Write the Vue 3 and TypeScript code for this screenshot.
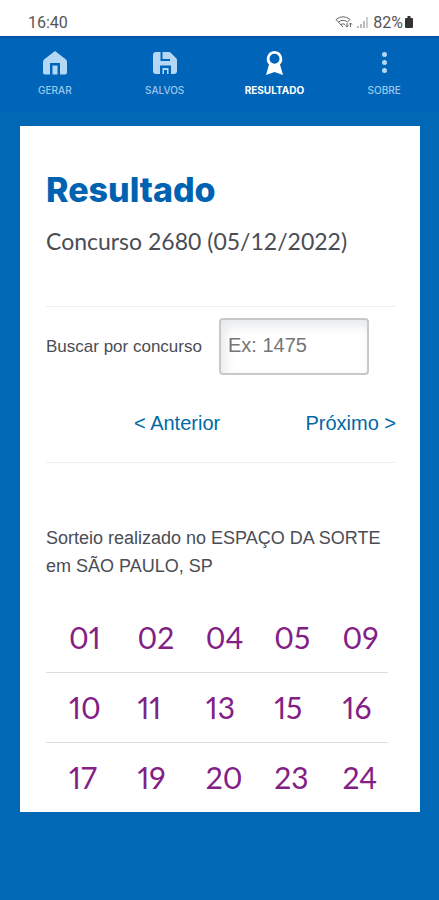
<script setup lang="ts">
import { ref } from 'vue'

type TabId = 'gerar' | 'salvos' | 'resultado' | 'sobre'

const tabs: { id: TabId; label: string }[] = [
  { id: 'gerar', label: 'GERAR' },
  { id: 'salvos', label: 'SALVOS' },
  { id: 'resultado', label: 'RESULTADO' },
  { id: 'sobre', label: 'SOBRE' },
]
const active = ref<TabId>('resultado')
const search = ref('')

const rows: string[][] = [
  ['01', '02', '04', '05', '09'],
  ['10', '11', '13', '15', '16'],
  ['17', '19', '20', '23', '24'],
]
</script>

<template>
  <div class="screen">
    <div class="status">
      <span>16:40</span>
      <span class="indicators">
        <svg class="wifi" viewBox="0 0 18 14" aria-hidden="true">
          <path d="M1 4.5Q8 -1 15 4.5M3.5 7Q8 3.5 12.5 7M6 9.5Q8 8 10 9.5" />
          <path d="M1 4.5L8 12M15 4.5L12.5 7M12 8v4M10.500 10.500L12 12l1.500-1.500M15.500 12V8M14 9.500L15.500 8L17 9.500" />
        </svg>
        <svg class="signal" viewBox="0 0 12 12" aria-hidden="true">
          <path d="M0 12v-2h2v2zM3 12V8h2v4zM6 12V5h2v7z" />
          <path class="weak" d="M9 12V1h2v11z" />
        </svg>
        <span>82%</span>
        <svg class="battery" viewBox="0 0 8 12" aria-hidden="true">
          <path d="M2.500 0h3v2H7q1 0 1 1v8q0 1-1 1H1q-1 0-1-1V3q0-1 1-1h1.500z" />
        </svg>
      </span>
    </div>

    <nav class="tabs">
      <button
        v-for="tab in tabs"
        :key="tab.id"
        type="button"
        class="tab"
        :class="{ active: active === tab.id }"
        @click="active = tab.id"
      >
        <svg viewBox="0 0 24 24" aria-hidden="true">
          <path v-if="tab.id === 'gerar'" fill-rule="evenodd" d="M12 0L23 8.500Q24 9.500 24 11V21.500Q24 23.500 22 23.500H2Q0 23.500 0 21.500V11Q0 9.500 1 8.500ZM7 23.500H9.500V14.500H14.500V23.500H17V12H7Z" />
          <path v-else-if="tab.id === 'salvos'" fill-rule="evenodd" d="M3 1H7.500V10H17V8H9.500V1H16Q17 1 18 2L23 7Q24 8 24 9V20Q24 23 21 23H18V14.500H7V23H3Q0 23 0 20V4Q0 1 3 1ZM9.500 23V17H15.500V23H14V19H11V23Z" />
          <path v-else-if="tab.id === 'resultado'" fill-rule="evenodd" d="M12.500 0A8 8 0 0 1 18 13.500L21 24L12.500 21L4 24L7 13.500A8 8 0 0 1 12.500 0ZM12.500 2.800A5 5 0 1 0 12.500 12.800A5 5 0 1 0 12.500 2.800Z" />
          <g v-else>
            <circle cx="12.500" cy="3.500" r="2.500" />
            <circle cx="12.500" cy="11.500" r="2.500" />
            <circle cx="12.500" cy="19.500" r="2.500" />
          </g>
        </svg>
        <span>{{ tab.label }}</span>
      </button>
    </nav>

    <main class="card">
      <h1>Resultado</h1>
      <p class="contest">Concurso 2680 (05/12/2022)</p>

      <section class="finder">
        <div class="search">
          <label for="contest">Buscar por concurso</label>
          <input id="contest" v-model="search" type="text" inputmode="numeric" placeholder="Ex: 1475" />
        </div>
        <div class="pager">
          <a href="#anterior">&lt; Anterior</a>
          <a href="#proximo">Próximo &gt;</a>
        </div>
      </section>

      <p class="place">Sorteio realizado no ESPAÇO DA SORTE em SÃO PAULO, SP</p>

      <table class="numbers">
        <tbody>
          <tr v-for="(row, i) in rows" :key="i">
            <td v-for="n in row" :key="n">{{ n }}</td>
          </tr>
        </tbody>
      </table>
    </main>
  </div>
</template>

<style>
body {
  background: #0068b5;
}
</style>

<style scoped>
.screen {
  min-height: 100vh;
  box-sizing: border-box;
  padding-bottom: 88px;
  background: #0068b5;
  font-family: "Liberation Sans", sans-serif;
  color: #4a4d55;
}
.status {
  display: flex;
  justify-content: space-between;
  align-items: center;
  height: 36px;
  box-sizing: border-box;
  padding: 8px 26px 0 28px;
  background: #fff;
  font-family: Roboto, sans-serif;
  font-size: 16px;
  color: #555;
}
.indicators {
  display: flex;
  align-items: center;
  gap: 4px;
}
.wifi {
  width: 18px;
  height: 14px;
  fill: none;
  stroke: #666;
}
.signal {
  width: 12px;
  height: 12px;
  fill: #bbb;
}
.signal .weak {
  fill: #ccc;
}
.battery {
  width: 8px;
  height: 12px;
  margin-left: -2px;
  fill: #333;
}
.tabs {
  display: grid;
  grid-template-columns: repeat(4, 1fr);
  height: 74px;
  border-top: 2px solid #0053a8;
  background: #0064b8;
}
.tab {
  display: flex;
  flex-direction: column;
  align-items: center;
  gap: 9px;
  padding: 13px 0 0;
  border: 0;
  background: none;
  font-family: Inter, sans-serif;
  font-size: 10px;
  line-height: 12px;
  font-weight: 500;
  color: #9cc8ee;
  cursor: pointer;
}
.tab svg {
  width: 24px;
  height: 24px;
  fill: #b4d7f5;
}
.tab.active {
  color: #fff;
  font-weight: 700;
}
.tab.active svg {
  fill: #fff;
}
.card {
  margin: 14px 19px 0 20px;
  padding: 44px 24px 0 26px;
  background: #fff;
}
h1 {
  margin: 0;
  font-family: Inter, sans-serif;
  font-size: 34px;
  line-height: 40px;
  font-weight: 800;
  color: #0063b1;
}
.contest {
  margin: 16px 0 50px;
  font-family: Lato, sans-serif;
  font-size: 23px;
  line-height: 30px;
}
.finder {
  border-top: 1px solid #eee;
  border-bottom: 1px solid #eee;
}
.search {
  display: flex;
  align-items: center;
  justify-content: space-between;
  gap: 16px;
  padding: 11px 27px 0 0;
}
.search label {
  font-size: 17px;
  white-space: nowrap;
}
.search input {
  width: 150px;
  min-width: 0;
  height: 57px;
  box-sizing: border-box;
  padding: 0 7px 2px;
  border: 2px solid #c8c8c8;
  border-radius: 4px;
  background: #fff;
  box-shadow: inset 4px 6px 12px #e6e8ea;
  font-family: "Liberation Sans", sans-serif;
  font-size: 20px;
  color: #4a4d55;
}
.search input::placeholder {
  color: #757575;
  opacity: 1;
}
.pager {
  display: flex;
  justify-content: space-between;
  padding: 37px 0 28px 88px;
}
.pager a {
  font-size: 20px;
  line-height: 22px;
  color: #0069a6;
  text-decoration: none;
}
.place {
  margin: 61px 0 23px;
  font-size: 18px;
  line-height: 28px;
}
.numbers {
  width: 342px;
  max-width: 100%;
  border-collapse: collapse;
  table-layout: fixed;
  font-family: Lato, sans-serif;
  font-size: 30px;
  line-height: 36px;
  font-variant-numeric: proportional-nums;
  color: #832085;
}
.numbers td {
  padding: 16px 0 17px 23px;
}
.numbers tr + tr {
  border-top: 1px solid #ddd;
}
</style>
